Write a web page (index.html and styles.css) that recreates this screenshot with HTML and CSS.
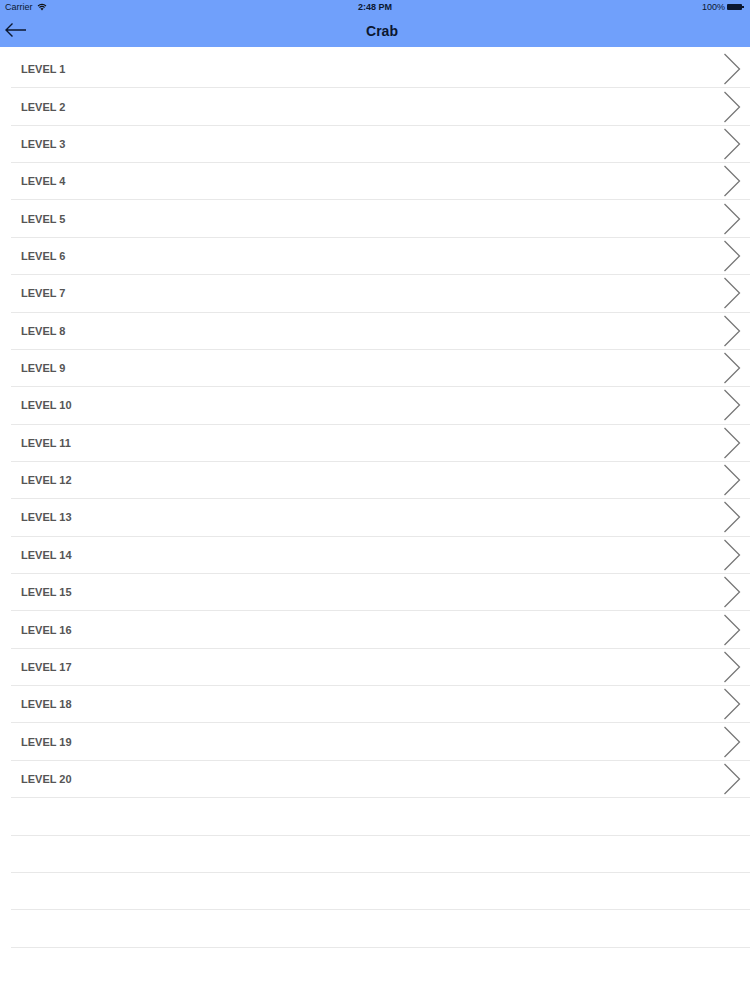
FILE: index.html
```html
<!DOCTYPE html>
<html lang="en">
<head>
    <meta charset="UTF-8">
    <meta name="viewport" content="width=device-width, initial-scale=1.0">
    <title>Crab</title>
    <link rel="stylesheet" href="styles.css">
</head>
<body>
    <!-- Status bar + nav bar -->
    <div class="topbar">
        <div class="status">
            <div class="status-left">
                Carrier
                <svg class="wifi" width="10" height="8" viewBox="0 0 10 8">
                    <path d="M5 7.5 L3.4 5.6 A2.4 2.4 0 0 1 6.6 5.6 Z" fill="#111"/>
                    <path d="M2.4 4.5 A3.9 3.9 0 0 1 7.6 4.5" stroke="#111" stroke-width="1.1" fill="none"/>
                    <path d="M1 3 A5.8 5.8 0 0 1 9 3" stroke="#111" stroke-width="1.1" fill="none"/>
                </svg>
            </div>
            <div class="status-time">2:48 PM</div>
            <div class="status-right">
                100%
                <span class="battery"><span class="battery-cap"></span></span>
            </div>
        </div>
        <div class="navbar">
            <svg class="back" width="24" height="16" viewBox="0 0 24 16">
                <path d="M22 8 H2 M8.5 1.5 L2 8 L8.5 14.5" stroke="#0b1730" stroke-width="1.4" fill="none"/>
            </svg>
            <div class="nav-title">Crab</div>
        </div>
    </div>

    <!-- Levels -->
    <div class="list" id="list"></div>
    <div class="list empty">
        <div class="row"></div>
        <div class="row"></div>
        <div class="row"></div>
        <div class="row"></div>
    </div>

    <script>
        const list = document.getElementById('list');
        for (let i = 1; i <= 20; i++) {
            const row = document.createElement('div');
            row.className = 'row';
            row.innerHTML = '<span class="label">LEVEL ' + i + '</span>' +
                '<svg class="chevron" width="18" height="32" viewBox="0 0 18 32">' +
                '<path d="M1.5 1 L16.5 16 L1.5 31" stroke="#777" stroke-width="1.3" fill="none"/></svg>';
            list.appendChild(row);
        }
    </script>
</body>
</html>
```

FILE: styles.css
```css
body {
    margin: 0;
    font-family: "Liberation Sans", Arial, sans-serif;
    background: #fff;
    width: 750px;
}
.topbar {
    background-color: #70a0fb;
    height: 47px;
    color: #0b1730;
}
.status {
    display: flex;
    justify-content: space-between;
    align-items: center;
    height: 14px;
    padding: 0 5px;
    font-size: 9px;
}
.status-left {
    display: flex;
    align-items: center;
    gap: 4px;
    width: 120px;
}
.status-time {
    font-weight: bold;
    font-size: 9px;
}
.status-right {
    display: flex;
    align-items: center;
    justify-content: flex-end;
    gap: 2px;
    width: 120px;
}
.battery {
    display: inline-block;
    width: 15px;
    height: 6px;
    background: #0b1730;
    border-radius: 1px;
    position: relative;
    margin-right: 3px;
}
.battery-cap {
    position: absolute;
    right: -2px;
    top: 2px;
    width: 2px;
    height: 2px;
    background: #0b1730;
}
.navbar {
    display: flex;
    align-items: center;
    justify-content: center;
    height: 33px;
    position: relative;
}
.back {
    position: absolute;
    left: 4px;
    top: 8px;
}
.nav-title {
    font-weight: bold;
    font-size: 14px;
    padding-left: 14px;
}
.list {
    padding-left: 11px;
}
#list {
    padding-top: 4px;
}
.row {
    height: 36.37px;
    border-bottom: 1px solid #e8e8e8;
    display: flex;
    align-items: center;
    justify-content: space-between;
}
.label {
    font-size: 11px;
    font-weight: bold;
    color: #555;
    padding-left: 10px;
}
.chevron {
    margin-right: 9px;
}
```
